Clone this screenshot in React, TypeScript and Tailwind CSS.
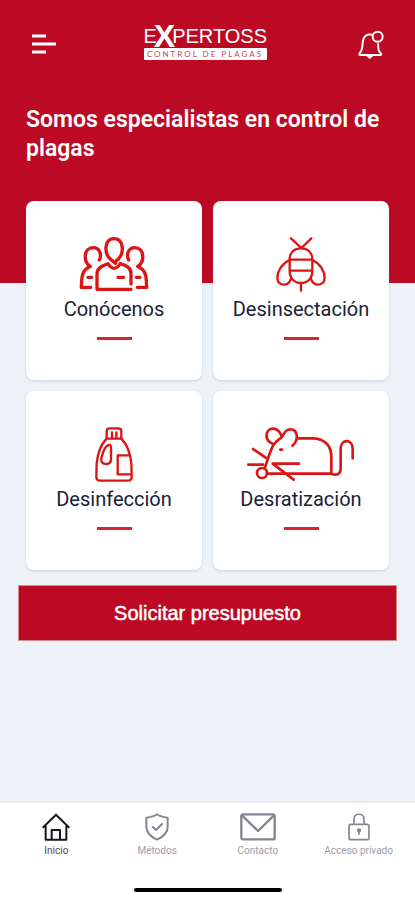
import type { ReactNode } from "react";

type Servicio = { name: string; icon: ReactNode };
type NavItem = { name: string; icon: ReactNode; active?: boolean };

function Logo() {
  return (
    <div className="flex w-[128px] flex-col pb-1 font-['Liberation_Sans',sans-serif] text-white">
      <div className="flex h-6 items-center text-xl leading-6">
        <span>E</span>
        <span className="-mx-[3px] text-[32px] leading-6 font-bold">X</span>
        <span>PERTOSS</span>
      </div>
      <span className="flex h-3 w-[123px] items-center justify-center rounded-[1px] bg-white font-['Lato',sans-serif] text-[8px] leading-3 tracking-[2px] text-[#c4465a]">
        CONTROL DE PLAGAS
      </span>
    </div>
  );
}

function PeopleIcon() {
  return (
    <svg width="70" height="55" viewBox="178 126 210 165" fill="none" stroke="#dc1414" strokeWidth="10" strokeLinecap="round" strokeLinejoin="round">
      <path d="M288 205l-14-11c-21-16-22-63 9-63s30 45 13 61l-11 10" />
      <path d="M334 283H232v-46c0-15 8-21 21-26l12-5c6 9 12 14 18 14s13-5 19-14l14 5c13 5 18 12 18 26v30M295 247h17" />
      <path d="M239 195c9-19-1-37-18-37-30 0-31 43-9 56l-13 8c-12 9-13 25-14 55h28M205 247h11" />
      <path d="M327 195c-9-19 1-37 18-37 30 0 31 43 9 56l13 8c12 9 13 25 14 55h-28M350 247h11" />
    </svg>
  );
}

function BeeIcon() {
  return (
    <svg width="52" height="55" viewBox="210 126 156 165" fill="none" stroke="#dc1414" strokeWidth="7" strokeLinecap="round" strokeLinejoin="round">
      <path d="M258 130l31 29 30-29M254 194c0-22 14-34 34-34s34 12 34 34v34c0 22-14 36-34 36s-34-14-34-36zM254 194h68M254 227h68M288 265v22" />
      <path d="M254 195c-24 11-37 34-37 54 0 14 10 21 23 20 10-1 14-7 18-17M322 195c24 11 37 34 37 54 0 14-10 21-23 20-10-1-14-7-18-17" />
    </svg>
  );
}

function BottleIcon() {
  return (
    <svg width="40" height="55" viewBox="224 126 120 165" fill="none" stroke="#dc1414" strokeWidth="7" strokeLinecap="round" strokeLinejoin="round">
      <path d="M262 161v-22c0-6 4-9 9-9h26c6 0 9 3 9 9v22zM278 142v18M291 142v18" />
      <path d="M262 161c-18 18-27 45-30 74l-1 41c0 7 4 11 11 11h84c7 0 11-4 11-11l-1-41c-3-29-12-56-30-74" />
      <path d="M268 180c-11 2-19 28-22 40-2 11 4 17 14 17 9 0 15-6 15-16v-33c0-6-2-9-7-8zM332 211h-37v57h41" />
    </svg>
  );
}

function MouseIcon() {
  return (
    <svg width="108" height="55" viewBox="128 126 324 165" fill="none" stroke="#dc1414" strokeWidth="8" strokeLinecap="round" strokeLinejoin="round">
      <path d="M205 176c-28-10-21-45 1-45 13 0 21 9 27 25M264 182c22-18 15-49-5-49-14 0-18 9-27 24-31 20-28 28-50 90" />
      <path d="M280 160h44c38 0 57 23 57 56v50H188" />
      <path d="M381 266c18 8 28-1 28-15v-60c0-30 36-30 36 0v29M228 194h5" />
      <circle cx="173" cy="264" r="15" />
      <path d="M146 192l38 26M132 239h44M284 236h-79l63 48" />
    </svg>
  );
}

function MenuIcon() {
  return (
    <svg width="26" height="20" viewBox="0 0 26 20" stroke="#fff" strokeWidth="3">
      <path d="M1 2h14M1 10h24M1 18h14" />
    </svg>
  );
}

function BellIcon() {
  return (
    <svg width="26" height="29" viewBox="0 0 78 87" fill="none" stroke="#fff" strokeWidth="6" strokeLinejoin="round">
      <path d="M44 15c-4-3-20-3-26 8-7 12-2 29-9 41l-5 8c0 2 1 3 3 3h60c2 0 3-1 3-3l-7-9c-3-7-2-15-3-23" />
      <path d="M27 76l8 7 9-7" />
      <circle cx="59" cy="20" r="15" />
    </svg>
  );
}

function HomeIcon() {
  return (
    <svg width="28" height="28" viewBox="0 0 84 84" fill="none" stroke="currentColor" strokeWidth="6" strokeLinejoin="round">
      <path d="M2 44L42 5l40 39M11 38v42h62V38M29 80V51h25v29" />
    </svg>
  );
}

function ShieldIcon() {
  return (
    <svg width="24" height="28" viewBox="0 0 72 84" fill="none" stroke="currentColor" strokeWidth="6" strokeLinecap="round" strokeLinejoin="round">
      <path d="M36 4c9 7 20 9 32 10v27c0 19-15 31-32 39C19 72 4 60 4 41V14c12-1 23-3 32-10zM23 42l10 9 18-18" />
    </svg>
  );
}

function MailIcon() {
  return (
    <svg width="36" height="28" viewBox="0 0 108 84" fill="none" stroke="currentColor" strokeWidth="7" strokeLinejoin="round">
      <rect x="4" y="4" width="100" height="75" rx="5" />
      <path d="M6 7l48 47 48-47" />
    </svg>
  );
}

function LockIcon() {
  return (
    <svg width="22" height="28" viewBox="0 0 66 84" fill="none" stroke="currentColor" strokeWidth="5">
      <rect x="3" y="34" width="60" height="46" rx="6" />
      <path d="M18 34V18C18-1 48-1 48 18v16" />
      <circle cx="33" cy="52" r="4" fill="currentColor" />
      <path d="M33 54v11" />
    </svg>
  );
}

const servicios: Servicio[] = [
  { name: "Conócenos", icon: <PeopleIcon /> },
  { name: "Desinsectación", icon: <BeeIcon /> },
  { name: "Desinfección", icon: <BottleIcon /> },
  { name: "Desratización", icon: <MouseIcon /> },
];

const navItems: NavItem[] = [
  { name: "Inicio", icon: <HomeIcon />, active: true },
  { name: "Métodos", icon: <ShieldIcon /> },
  { name: "Contacto", icon: <MailIcon /> },
  { name: "Acceso privado", icon: <LockIcon /> },
];

export default function App() {
  return (
    <div className="flex min-h-screen flex-col bg-[#eff3f7] font-['Roboto',sans-serif]">
      <header className="bg-[#bd0a24] px-[26px] pb-[120px] text-white">
        <div className="flex h-[88px] items-center justify-between px-[5px]">
          <button type="button" aria-label="Menú">
            <MenuIcon />
          </button>
          <Logo />
          <button type="button" aria-label="Notificaciones">
            <BellIcon />
          </button>
        </div>
        <h1 className="mt-[17px] text-[23px] leading-[29px] font-semibold">Somos especialistas en control de plagas</h1>
      </header>

      {/* Las tarjetas se solapan con la cabecera roja */}
      <main className="-mt-[82px] flex-1 pb-8">
        <div className="grid grid-cols-2 gap-[11px] px-[26px]">
          {servicios.map((servicio) => (
            <a
              key={servicio.name}
              href="#"
              className="flex h-[179px] flex-col items-center rounded-lg bg-white pt-9 shadow-[0_1px_3px_rgba(60,80,140,0.2)]"
            >
              {servicio.icon}
              <span className="mt-[3px] text-xl leading-7 text-[#1b2136]">{servicio.name}</span>
              <span className="mt-[14px] h-[3px] w-[35px] bg-[#d22630]" />
            </a>
          ))}
        </div>
        <div className="mt-[15px] px-[18px]">
          <button
            type="button"
            className="h-14 w-full border border-[#d98a8a] bg-[#bd0a24] font-['Liberation_Sans',sans-serif] text-xl text-white [-webkit-text-stroke:0.5px_white]"
          >
            Solicitar presupuesto
          </button>
        </div>
      </main>

      <nav className="border-t-2 border-[#e6eaed] bg-white px-[6px] pt-[10px] pb-2">
        <ul className="grid grid-cols-4">
          {navItems.map((item) => (
            <li key={item.name}>
              <a
                href="#"
                className={
                  item.active
                    ? "flex flex-col items-center gap-1 text-[#15151c]"
                    : "flex flex-col items-center gap-1 text-[#85858f]"
                }
              >
                {item.icon}
                <span className="text-[10px] leading-3 whitespace-nowrap opacity-80">{item.name}</span>
              </a>
            </li>
          ))}
        </ul>
        <div className="mx-auto mt-[31px] h-1 w-[148px] rounded-full bg-black" />
      </nav>
    </div>
  );
}
